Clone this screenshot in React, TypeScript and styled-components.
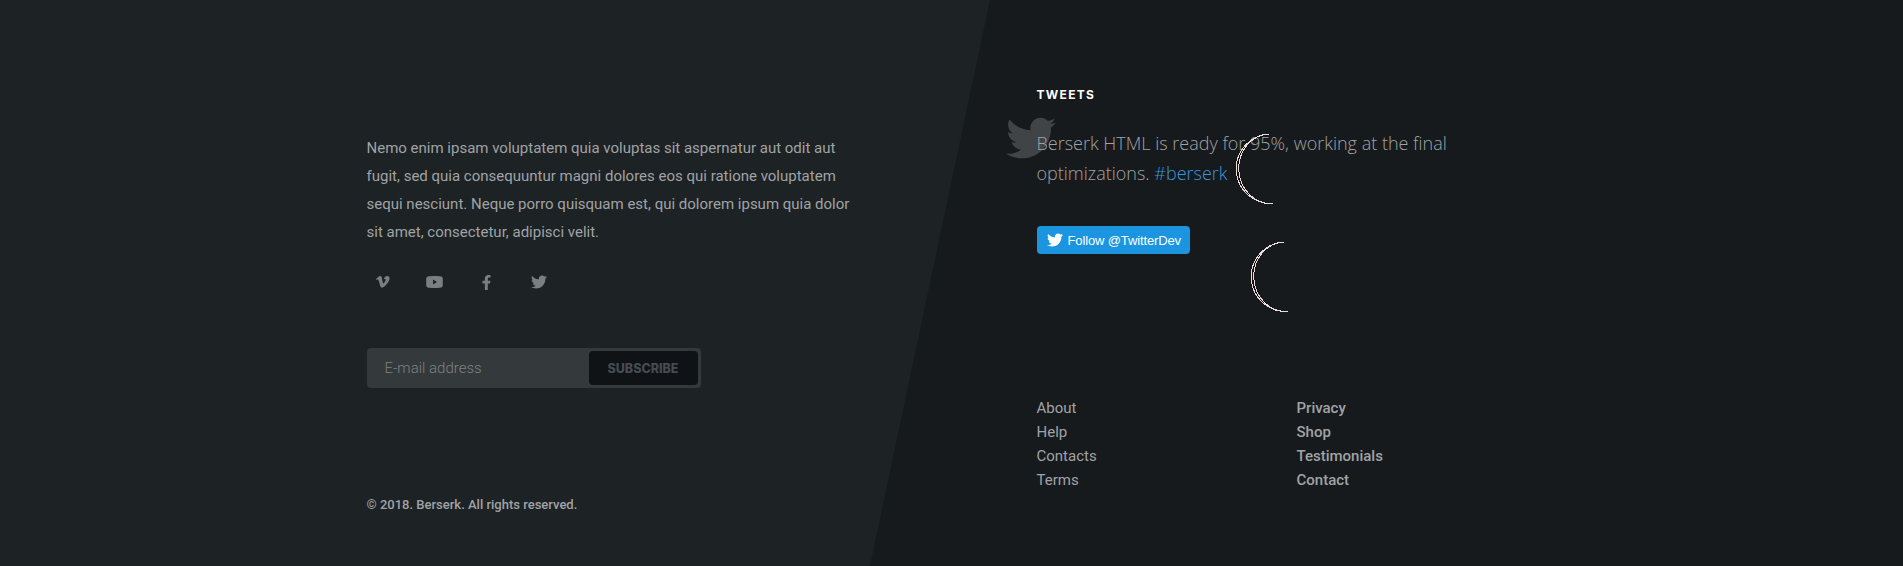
import React from "react";
import styled, { createGlobalStyle } from "styled-components";
import { FaVimeoV, FaTwitter, FaFacebookF } from "react-icons/fa";

const Global = createGlobalStyle`
  * { box-sizing: border-box; }
  body { margin: 0; background: #171a1c; font-family: Roboto, sans-serif; color: #a0a3a6; }
  a { color: inherit; text-decoration: none; }
`;

const Footer = styled.footer`
  height: 566px;
  padding-left: 366.5px;
  display: grid;
  grid-template-columns: 670px 1fr;
  overflow: hidden;
  background: #171a1c;
  position: relative;
  isolation: isolate;
  &::before {
    content: "";
    position: absolute;
    inset: 0 auto 0 0;
    width: 990px;
    background: #1d2224;
    clip-path: polygon(0 0, 100% 0, 870px 100%, 0 100%);
    z-index: -1;
  }
`;

const About = styled.section`
  padding-top: 134px;
`;

const Intro = styled.p`
  margin: 0;
  width: 490px;
  font-size: 15px;
  line-height: 28px;
`;

const Social = styled.nav`
  margin-top: 22px;
  height: 28px;
  display: flex;
  gap: 20px;
  color: #7c7f80;
  a { width: 32px; display: flex; align-items: center; justify-content: center; }
`;

const Subscribe = styled.form`
  margin-top: 52px;
  width: 334px;
  height: 40px;
  padding: 3px;
  display: flex;
  border-radius: 4px;
  background: #34393b;
`;

const Email = styled.input`
  flex: 1;
  min-width: 0;
  border: 0;
  padding: 0 15px;
  background: transparent;
  font: 300 15px Roboto, sans-serif;
  &::placeholder { color: #7d8182; opacity: 1; }
`;

const SubmitButton = styled.button`
  width: 109px;
  border: 0;
  border-radius: 4px;
  padding: 0;
  background: #0f1315;
  color: #464b53;
  font: 800 12.5px Inter, sans-serif;
`;

const Copyright = styled.p`
  margin: 107px 0 0;
  font-size: 13px;
  font-weight: 500;
  line-height: 20px;
`;

const Side = styled.section`
  padding-top: 85px;
`;

const Heading = styled.h2`
  margin: 0;
  color: #fff;
  font: 700 12px/20px Inter, sans-serif;
  letter-spacing: 1.3px;
`;

const Tweet = styled.div`
  position: relative;
  margin-top: 23px;
  width: 425px;
  font: 300 18px/30px "Open Sans", sans-serif;
  a { color: #3f95dc; }
  p { margin: 0; position: relative; }
`;

const Bird = styled(FaTwitter)`
  position: absolute;
  left: -31px;
  top: -15px;
  color: #404447;
`;

const Follow = styled.a`
  margin-top: 38px;
  width: 153px;
  height: 28px;
  padding-left: 10px;
  display: flex;
  align-items: center;
  gap: 5px;
  border-radius: 4px;
  background: #1b95e0;
  && { color: #fff; }
  font: 13px "Liberation Sans", sans-serif;
  letter-spacing: -0.13px;
  white-space: nowrap;
`;

const Spinner = styled.svg<{ $x: number; $y: number }>`
  position: absolute;
  left: ${(p) => p.$x}px;
  top: ${(p) => p.$y}px;
`;

const Links = styled.div`
  margin-top: 142px;
  display: grid;
  grid-template-columns: 260px 200px;
`;

const LinkColumn = styled.nav<{ $strong?: boolean }>`
  display: flex;
  flex-direction: column;
  font-size: 15px;
  line-height: 24px;
  font-weight: ${(p) => (p.$strong ? 500 : 400)};
`;

const Crescent = ({ x, y }: { x: number; y: number }) => (
  <Spinner $x={x} $y={y} width="40" height="72" viewBox="0 0 40 72" shapeRendering="crispEdges">
    <path
      d="M33 1A34.700 34.700 0 0 0 37 70.500A32.300 34.800 -3.300 0 1 33 1Z"
      fill="#1d0d0e"
      stroke="#e6dcda"
      strokeWidth="1"
    />
  </Spinner>
);

export default function App() {
  return (
    <>
      <Global />
      <Footer>
        <About>
          <Intro>
            Nemo enim ipsam voluptatem quia voluptas sit aspernatur aut odit aut fugit, sed quia consequuntur magni
            dolores eos qui ratione voluptatem sequi nesciunt. Neque porro quisquam est, qui dolorem ipsum quia dolor
            sit amet, consectetur, adipisci velit.
          </Intro>
          <Social>
            <a href="#vimeo"><FaVimeoV size={15.5} /></a>
            <a href="#youtube">
              <svg width="17" height="12" viewBox="0 0 17 12">
                <path fill="currentColor" fillRule="evenodd" d="M3 .3Q8.500-.2 14 .3Q16.700.4 16.800 3V9Q16.700 11.600 14 11.700Q8.500 12.200 3 11.700Q.3 11.600.2 9V3Q.3.4 3 .3ZM7 3.500V8.500L11 6Z" />
              </svg>
            </a>
            <a href="#facebook"><FaFacebookF size={15} /></a>
            <a href="#twitter"><FaTwitter size={16} /></a>
          </Social>
          <Subscribe>
            <Email placeholder="E-mail address" />
            <SubmitButton type="button">SUBSCRIBE</SubmitButton>
          </Subscribe>
          <Copyright>© 2018. Berserk. All rights reserved.</Copyright>
        </About>
        <Side>
          <Heading>TWEETS</Heading>
          <Tweet>
            <Bird size={50} />
            <p>
              Berserk HTML is ready for 95%, working at the final optimizations. <a href="#berserk">#berserk</a>
            </p>
          </Tweet>
          <Follow href="#follow">
            <FaTwitter size={16} />
            Follow @TwitterDev
          </Follow>
          <Links>
            <LinkColumn>
              <a href="#about">About</a>
              <a href="#help">Help</a>
              <a href="#contacts">Contacts</a>
              <a href="#terms">Terms</a>
            </LinkColumn>
            <LinkColumn $strong>
              <a href="#privacy">Privacy</a>
              <a href="#shop">Shop</a>
              <a href="#testimonials">Testimonials</a>
              <a href="#contact">Contact</a>
            </LinkColumn>
          </Links>
        </Side>
        <Crescent x={1236} y={133} />
        <Crescent x={1251} y={241} />
      </Footer>
    </>
  );
}
